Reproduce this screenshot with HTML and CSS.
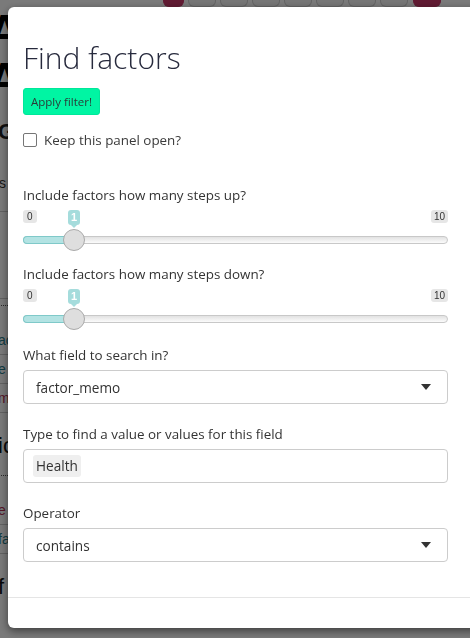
FILE: index.html
```html
<!DOCTYPE html>
<html>
<head>
<meta charset="utf-8">
<link rel="stylesheet" href="styles.css">
</head>
<body>
<div class="page">
  <div class="tabs">
    <span class="tab tab-pink tab-first"></span>
    <span class="tab"></span><span class="tab"></span><span class="tab"></span><span class="tab"></span>
    <span class="tab"></span><span class="tab"></span><span class="tab"></span>
    <span class="tab tab-pink tab-last"></span>
  </div>
  <div class="bg-content">
    <div class="bg-big">A</div>
    <div class="bg-big">A</div>
    <div class="bg-g">G</div>
    <div class="bg-small">cs</div>
    <div class="bg-small bg-s">s</div>
    <div class="bg-dots"></div>
    <div class="bg-link">ac</div>
    <div class="bg-link">e</div>
    <div class="bg-red">m</div>
    <div class="bg-mid">ic</div>
    <div class="bg-dots"></div>
    <div class="bg-red">e</div>
    <div class="bg-link">fa</div>
    <div class="bg-mid">f</div>
  </div>
</div>

<div class="overlay">
  <div class="modal">
    <div class="modal-body">
      <h2 class="title">Find factors</h2>
      <button class="btn-apply">Apply filter!</button>
      <label class="check">
        <span class="box"></span>
        <span>Keep this panel open?</span>
      </label>

      <div class="group group-first">
        <div class="label">Include factors how many steps up?</div>
        <div class="slider">
          <div class="s-labels">
            <span class="s-min">0</span>
            <span class="s-single">1</span>
            <span class="s-max">10</span>
          </div>
          <div class="s-track">
            <div class="s-line"></div>
            <div class="s-bar"></div>
            <div class="s-handle"></div>
          </div>
        </div>
      </div>

      <div class="group">
        <div class="label">Include factors how many steps down?</div>
        <div class="slider">
          <div class="s-labels">
            <span class="s-min">0</span>
            <span class="s-single">1</span>
            <span class="s-max">10</span>
          </div>
          <div class="s-track">
            <div class="s-line"></div>
            <div class="s-bar"></div>
            <div class="s-handle"></div>
          </div>
        </div>
      </div>

      <div class="group group-after">
        <div class="label">What field to search in?</div>
        <div class="select">
          <span>factor_memo</span>
          <span class="caret"></span>
        </div>
      </div>

      <div class="group">
        <div class="label">Type to find a value or values for this field</div>
        <div class="input">
          <span class="tag">Health</span>
        </div>
      </div>

      <div class="group">
        <div class="label">Operator</div>
        <div class="select">
          <span>contains</span>
          <span class="caret"></span>
        </div>
      </div>
    </div>
    <div class="modal-footer"></div>
  </div>
</div>
</body>
</html>
```
FILE: styles.css
```css
html, body {
  margin: 0;
  padding: 0;
  height: 100%;
  overflow: hidden;
}
body {
  font-family: "Open Sans", "Noto Sans", sans-serif;
  background: #fff;
  color: #333;
}
.page {
  width: 470px;
  height: 638px;
}
.tabs {
  display: flex;
  gap: 4px;
  padding-left: 163px;
}
.tab {
  display: block;
  width: 26px;
  height: 6px;
  border: 1px solid #d0d0d0;
  border-top: none;
  border-radius: 0 0 6px 6px;
  background: #f6f6f6;
}
.tab-first { width: 19px; }
.tab-pink { background: #c9386a; border-color: #c9386a; }
.tab-last { width: 26px; margin-left: 1px; }
.bg-content {
  display: flex;
  flex-direction: column;
  margin-left: -12px;
  font-family: "Liberation Sans", sans-serif;
}
.bg-big {
  font-size: 46px;
  font-weight: bold;
  line-height: 48px;
  color: #000;
}
.bg-g {
  font-size: 22px;
  font-weight: bold;
  margin-top: 16px;
  margin-left: 10px;
  color: #222;
}
.bg-small {
  font-size: 14px;
  margin-top: 30px;
  margin-left: 4px;
  color: #333;
  border-bottom: 1px solid #ccc;
  padding-bottom: 20px;
}
.bg-s { margin-top: 60px; padding-bottom: 10px; }
.bg-dots {
  border-top: 1px dotted #555;
  height: 20px;
  margin-top: 6px;
}
.bg-link {
  color: #2a7d8a;
  font-size: 14px;
  border-bottom: 1px solid #ccc;
  padding: 6px 0 6px 10px;
}
.bg-red {
  color: #b03050;
  font-size: 14px;
  border-bottom: 1px solid #ccc;
  padding: 6px 0 6px 10px;
}
.bg-mid {
  font-size: 22px;
  color: #111;
  padding: 20px 0 10px 10px;
}

.overlay {
  position: fixed;
  inset: 0;
  background: rgba(0, 0, 0, 0.52);
}
.modal {
  margin: 7px 0 0 8px;
  width: 480px;
  height: 621px;
  background: #fff;
  border-radius: 6px 0 0 6px;
  box-shadow: 0 3px 9px rgba(0, 0, 0, 0.5);
  display: flex;
  flex-direction: column;
}
.modal-body {
  padding: 26px 0 0 15px;
  width: 425px;
  flex: 1;
}
.title {
  margin: 0;
  font-size: 30px;
  font-weight: 300;
  line-height: 50px;
  color: #272a3d;
}
.btn-apply {
  display: block;
  margin-top: 5px;
  padding: 0 7px;
  height: 27px;
  border: 1px solid #00e79a;
  border-radius: 3px;
  background: #00f5a3;
  color: #2a3a38;
  font-family: inherit;
  font-size: 11.5px;
}
.check {
  display: flex;
  align-items: center;
  gap: 7px;
  margin-top: 16px;
  font-size: 13.4px;
  color: #3a3a3a;
}
.box {
  width: 12px;
  height: 12px;
  border: 1px solid #767676;
  border-radius: 2px;
}
.group { margin-top: 20px; }
.group-first { margin-top: 36px; }
.group-after { margin-top: 22px; }
.label {
  font-size: 13.4px;
  line-height: 20px;
  color: #333;
  margin-bottom: 5px;
}
.slider {
  font-family: "Liberation Sans", Arial, sans-serif;
}
.s-labels {
  position: relative;
  height: 22px;
}
.s-min, .s-max, .s-single {
  position: absolute;
  top: 0;
  font-size: 10px;
  line-height: 13px;
  padding: 0 3px;
  border-radius: 3px;
}
.s-min { left: 0; background: #e6e6e6; color: #333; padding: 0 4px; }
.s-max { right: 0; background: #e6e6e6; color: #333; }
.s-single {
  left: 45px;
  top: 0;
  background: #a5dcdc;
  color: #fff;
  font-weight: bold;
  font-size: 11px;
  line-height: 15px;
  padding: 0 3px;
}
.s-single::after {
  content: "";
  position: absolute;
  left: 50%;
  bottom: -3px;
  margin-left: -3px;
  border: 3px solid transparent;
  border-top-color: #a5dcdc;
  border-bottom: 0;
}
.s-track {
  position: relative;
  height: 12px;
}
.s-line {
  position: absolute;
  left: 0;
  right: 0;
  top: 4px;
  height: 6px;
  border: 1px solid #c8c8c8;
  border-radius: 8px;
  background: linear-gradient(to bottom, #e2e2e2, #fbfbfb);
}
.s-bar {
  position: absolute;
  left: 0;
  top: 4px;
  width: 48px;
  height: 6px;
  border: 1px solid #7fc9c9;
  border-right: none;
  border-radius: 8px 0 0 8px;
  background: #b3e3e3;
}
.s-handle {
  position: absolute;
  left: 40px;
  top: -3px;
  width: 20px;
  height: 20px;
  border: 1px solid #aaa;
  border-radius: 50%;
  background: #dedede;
}
.select, .input {
  height: 32px;
  border: 1px solid #ccc;
  border-radius: 4px;
  display: flex;
  align-items: center;
  font-size: 13.6px;
  color: #333;
}
.select {
  justify-content: space-between;
  padding: 0 16px 0 12px;
}
.caret {
  width: 0;
  height: 0;
  border-left: 5px solid transparent;
  border-right: 5px solid transparent;
  border-top: 6px solid #333;
}
.input { padding: 0 9px; }
.tag {
  background: #efefef;
  border-radius: 3px;
  padding: 1px 3px;
  line-height: 20px;
}
.modal-footer {
  border-top: 1px solid #e5e5e5;
  height: 30px;
}
```
